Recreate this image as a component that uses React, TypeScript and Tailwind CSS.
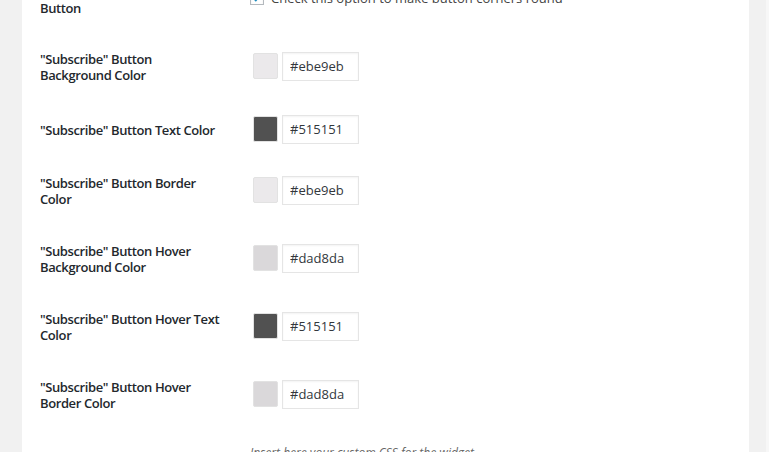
const rows = [
  { label: ['"Subscribe" Button', 'Background Color'], value: '#ebe9eb', gap: 'mt-[35px]' },
  { label: ['"Subscribe" Button Text Color'], value: '#515151', gap: 'mt-[31px]' },
  { label: ['"Subscribe" Button Border', 'Color'], value: '#ebe9eb', gap: 'mt-[29px]' },
  { label: ['"Subscribe" Button Hover', 'Background Color'], value: '#dad8da', gap: 'mt-[36px]' },
  { label: ['"Subscribe" Button Hover Text', 'Color'], value: '#515151', gap: 'mt-[36px]' },
  { label: ['"Subscribe" Button Hover', 'Border Color'], value: '#dad8da', gap: 'mt-[36px]' },
];

const labelCls = 'w-[213px] shrink-0 pt-[2px] text-[13px] leading-[16px] font-semibold tracking-[-0.4px] text-[#23282d]';

function ColorRow({ label, value, gap }: { label: string[]; value: string; gap: string }) {
  return (
    <div className={`flex items-center h-[32px] ${gap}`}>
      <p className={labelCls}>
        {label[0]}
        {label[1] && <br />}
        {label[1]}
      </p>
      <div className="flex items-center gap-[4px]">
        <span
          className="block w-[25px] h-[26px] rounded-[2px] border border-[#e2e2e2]"
          style={{ backgroundColor: value }}
        />
        <input
          readOnly
          value={value}
          className="w-[77px] h-[29px] border border-[#e5e5e5] bg-white px-[7px] text-[13px] text-[#32373c] outline-none shadow-[inset_0_1px_2px_rgba(0,0,0,0.05)]"
        />
      </div>
    </div>
  );
}

export default function App() {
  return (
    <div className="h-[452px] overflow-hidden bg-[#f1f1f1] flex" style={{ fontFamily: '"Open Sans", "Noto Sans", sans-serif' }}>
      <div className="ml-[22px] w-[727px] bg-white pl-[18px]">
        {/* row cut off at the top */}
        <div className="flex items-center h-[32px] -mt-[17px]">
          <p className={labelCls}>
            Round Corners
            <br />
            Button
          </p>
          <label className="flex items-center gap-[7px] -ml-[3px] -mt-[3px] text-[13px] leading-[16px] text-[#444]">
            <span className="w-[14px] h-[14px] border border-[#b4b9be] bg-white flex items-center justify-center shadow-[inset_0_1px_2px_rgba(0,0,0,0.1)]">
              <svg viewBox="0 0 20 20" className="w-[12px] h-[12px]">
                <path d="M4 10l4 4 8-9" fill="none" stroke="#1e8cbe" strokeWidth="3" />
              </svg>
            </span>
            Check this option to make button corners round
          </label>
        </div>

        {rows.map((r) => (
          <ColorRow key={r.label.join(' ') + r.value} {...r} />
        ))}

        <div className="flex mt-[35px]">
          <p className={`${labelCls} pt-[5px]`}>Custom CSS</p>
          <p className="-ml-[3px] text-[12px] leading-[16px] italic text-[#666]">Insert here your custom CSS for the widget</p>
        </div>
      </div>
      <div className="w-[17px]" />
      <div className="w-[3px] bg-[#f7f7f7]" />
    </div>
  );
}
